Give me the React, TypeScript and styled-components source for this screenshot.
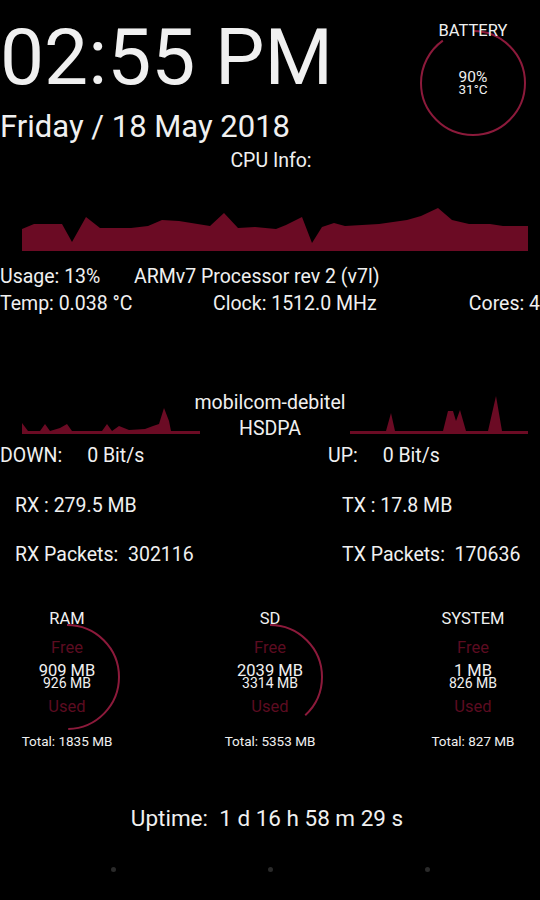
import styled, { createGlobalStyle } from "styled-components";

const CRIMSON = "#6b0b24";
const ARC = "#8c1a3b";
const DIM = "#5c0c20";

const GlobalStyle = createGlobalStyle`
  html, body {
    margin: 0;
    padding: 0;
    background: #000;
  }
  body {
    font-family: Roboto, "Noto Sans", "Liberation Sans", sans-serif;
    color: #f0f0f0;
  }
`;

const Screen = styled.div`
  width: 540px;
  height: 900px;
  overflow: hidden;
  background: #000;
  display: flex;
  flex-direction: column;
  white-space: nowrap;
`;

const Header = styled.div`
  display: flex;
  justify-content: space-between;
  align-items: flex-start;
`;

const Clock = styled.div`
  font-size: 78.5px;
  line-height: 80px;
  margin-top: 17px;
`;

const DateLine = styled.div`
  font-size: 31px;
  line-height: 34px;
  margin-top: 13px;
`;

const SideCol = styled.div`
  width: 134px;
  display: flex;
  flex-direction: column;
  align-items: center;
`;

const Gauge = styled.div<{ top?: number }>`
  position: relative;
  width: 110px;
  height: 110px;
  margin-top: ${(p) => p.top ?? 0}px;
`;

const GaugeTitle = styled.div`
  position: absolute;
  top: -7px;
  left: 0;
  right: 0;
  text-align: center;
  font-size: 16.5px;
  line-height: 20px;
`;

const GaugeCenter = styled.div`
  position: absolute;
  inset: 0;
  display: flex;
  flex-direction: column;
  align-items: center;
  justify-content: center;
`;

const BatPct = styled.div`
  font-size: 15.5px;
  line-height: 11px;
`;

const BatTemp = styled.div`
  font-size: 13.5px;
  line-height: 12px;
`;

const SectionTitle = styled.div`
  font-size: 19.5px;
  line-height: 22px;
  margin-top: 6px;
  text-align: center;
  padding-left: 2px;
`;

const GraphSvg = styled.svg`
  display: block;
  margin: 32px 12px 0 22px;
`;

const InfoRow = styled.div<{ cols: string; top?: number }>`
  display: grid;
  grid-template-columns: ${(p) => p.cols};
  font-size: 19.5px;
  line-height: 27px;
  margin-top: ${(p) => p.top ?? 0}px;
`;

const NetRow = styled.div`
  display: grid;
  grid-template-columns: 178px 1fr 178px;
  padding: 0 12px 0 22px;
  margin-top: 73px;
  height: 52px;
`;

const Carrier = styled.div`
  display: flex;
  flex-direction: column;
  align-items: center;
  font-size: 19.5px;
  line-height: 26px;
  margin: 0 -15px 0 -25px;
`;

const SpeedRow = styled.div`
  display: grid;
  grid-template-columns: 328px 1fr;
  font-size: 19.5px;
  line-height: 28px;
`;

const Speed = styled.div`
  display: flex;
  gap: 25px;
`;

const TrafficGrid = styled.div`
  display: grid;
  grid-template-columns: 327px 1fr;
  padding-left: 15px;
  margin-top: 11px;
  font-size: 19.5px;
  line-height: 49px;
  white-space: pre;
`;

const MemRow = styled.div`
  display: flex;
  justify-content: space-between;
  margin-top: 30px;
`;

const MemLabel = styled.div`
  font-size: 16.5px;
  line-height: 20px;
  margin-bottom: -7px;
`;

const MemHint = styled.div<{ gap?: number }>`
  color: ${DIM};
  font-size: 16.5px;
  line-height: 20px;
  margin-top: ${(p) => p.gap ?? 0}px;
`;

const MemValue = styled.div<{ size: number; gap?: number }>`
  font-size: ${(p) => p.size}px;
  line-height: 13px;
  margin-top: ${(p) => p.gap ?? 0}px;
`;

const MemTotal = styled.div`
  font-size: 13.5px;
  line-height: 18px;
`;

const Uptime = styled.div`
  margin-top: 54px;
  font-size: 22.5px;
  line-height: 28px;
  text-align: center;
  white-space: pre;
  padding-right: 6px;
`;

const Dots = styled.div`
  display: flex;
  justify-content: center;
  gap: 152px;
  margin-top: 35px;
`;

const Dot = styled.span`
  width: 5px;
  height: 5px;
  border-radius: 50%;
  background: #2a2a2a;
`;

type Pt = [number, number];

// points in page coordinates, shifted by the graph's own origin
function AreaGraph({ pts, x0, y0, w, h, floor }: { pts: Pt[]; x0: number; y0: number; w: number; h: number; floor: number }) {
  const line = pts.map(([x, y]) => `${x - x0},${y - y0}`).join(" ");
  const first = pts[0][0] - x0;
  const last = pts[pts.length - 1][0] - x0;
  const poly = `${first},${floor - y0} ${line} ${last},${floor - y0}`;
  return (
    <svg width={w} height={h} viewBox={`0 0 ${w} ${h}`} style={{ display: "block" }}>
      <polygon points={poly} fill={CRIMSON} />
    </svg>
  );
}

function Ring({ fraction }: { fraction: number }) {
  const r = 52;
  const len = 2 * Math.PI * r;
  return (
    <svg width={110} height={110} viewBox="0 0 110 110" style={{ display: "block" }}>
      {fraction > 0.005 && (
        <circle
          cx={55}
          cy={55}
          r={r}
          fill="none"
          stroke={ARC}
          strokeWidth={2}
          strokeDasharray={`${len * fraction} ${len}`}
          transform="rotate(-90 55 55)"
        />
      )}
    </svg>
  );
}

const cpuPts: Pt[] = [
  [22, 230], [34, 225], [62, 225], [72, 243], [86, 218], [100, 229], [131, 229], [148, 227],
  [162, 221], [179, 222], [210, 227], [224, 214], [238, 229], [255, 228], [276, 230], [286, 226],
  [302, 218], [312, 244], [322, 228], [334, 224], [345, 227], [379, 225], [407, 221], [421, 217],
  [438, 209], [452, 221], [469, 225], [490, 225], [503, 227], [528, 227],
];

const downPts: Pt[] = [
  [22, 422], [28, 430], [40, 430], [45, 423], [50, 430], [60, 427], [67, 423], [72, 430],
  [102, 430], [107, 423], [112, 430], [119, 425], [129, 429], [145, 428], [153, 425], [159, 423],
  [164, 407], [169, 420], [171, 430], [200, 430],
];

const upPts: Pt[] = [
  [350, 430], [386, 430], [391, 412], [395, 430], [443, 430], [448, 410], [453, 410], [456, 420],
  [460, 409], [466, 430], [488, 430], [496, 395], [502, 430], [528, 430],
];

const memory = [
  { name: "RAM", free: 909, used: 926, total: 1835 },
  { name: "SD", free: 2039, used: 3314, total: 5353 },
  { name: "SYSTEM", free: 1, used: 826, total: 827 },
];

export default function App() {
  return (
    <Screen>
      <GlobalStyle />
      <Header>
        <div>
          <Clock>02:55 PM</Clock>
          <DateLine>Friday / 18 May 2018</DateLine>
        </div>
        <SideCol>
          <Gauge top={28}>
            <Ring fraction={0.9} />
            <GaugeTitle>BATTERY</GaugeTitle>
            <GaugeCenter>
              <BatPct>90%</BatPct>
              <BatTemp>31°C</BatTemp>
            </GaugeCenter>
          </Gauge>
        </SideCol>
      </Header>

      <SectionTitle>CPU Info:</SectionTitle>
      <GraphSvg width={506} height={47} viewBox="0 0 506 47">
        <polygon
          fill={CRIMSON}
          points={`0,47 ${cpuPts.map(([x, y]) => `${x - 22},${y - 205}`).join(" ")} 506,47`}
        />
      </GraphSvg>

      <InfoRow cols="134px 1fr" top={12}>
        <span>Usage: 13%</span>
        <span>ARMv7 Processor rev 2 (v7l)</span>
      </InfoRow>
      <InfoRow cols="213px 1fr auto">
        <span>Temp: 0.038 °C</span>
        <span>Clock: 1512.0 MHz</span>
        <span>Cores: 4</span>
      </InfoRow>

      <NetRow>
        <AreaGraph pts={downPts} x0={22} y0={389} w={178} h={44} floor={433} />
        <Carrier>
          <span>mobilcom-debitel</span>
          <span>HSDPA</span>
        </Carrier>
        <AreaGraph pts={upPts} x0={350} y0={389} w={178} h={44} floor={433} />
      </NetRow>

      <SpeedRow>
        <Speed>
          <span>DOWN:</span>
          <span>0 Bit/s</span>
        </Speed>
        <Speed>
          <span>UP:</span>
          <span>0 Bit/s</span>
        </Speed>
      </SpeedRow>

      <TrafficGrid>
        <span>RX : 279.5 MB</span>
        <span>TX : 17.8 MB</span>
        <span>RX Packets:  302116</span>
        <span>TX Packets:  170636</span>
      </TrafficGrid>

      <MemRow>
        {memory.map((m) => (
          <SideCol key={m.name}>
            <MemLabel>{m.name}</MemLabel>
            <Gauge>
              <Ring fraction={m.free / m.total} />
              <GaugeCenter>
                <MemHint>Free</MemHint>
                <MemValue size={16.5} gap={6}>{m.free} MB</MemValue>
                <MemValue size={14}>{m.used} MB</MemValue>
                <MemHint gap={7}>Used</MemHint>
              </GaugeCenter>
            </Gauge>
            <MemTotal>Total: {m.total} MB</MemTotal>
          </SideCol>
        ))}
      </MemRow>

      <Uptime>Uptime:  1 d 16 h 58 m 29 s</Uptime>

      <Dots>
        <Dot />
        <Dot />
        <Dot />
      </Dots>
    </Screen>
  );
}
